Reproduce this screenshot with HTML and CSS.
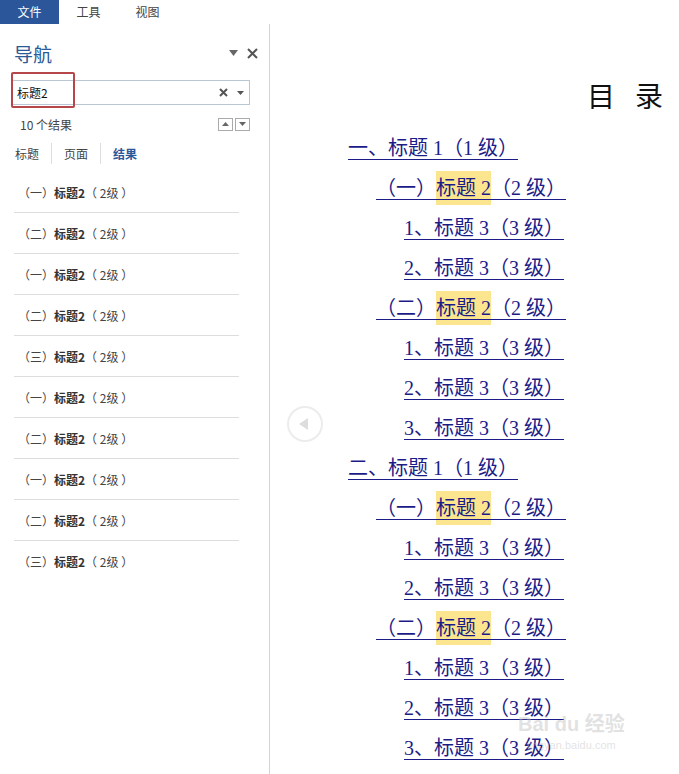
FILE: index.html
```html
<!DOCTYPE html>
<html lang="zh">
<head>
<meta charset="utf-8">
<link rel="stylesheet" href="styles.css">
</head>
<body>
<div class="topbar">
  <div class="tab active">文件</div>
  <div class="tab">工具</div>
  <div class="tab">视图</div>
</div>
<div class="main">
  <aside class="nav">
    <div class="nav-head">
      <div class="nav-title">导航</div>
      <div class="nav-ctrls">
        <svg width="9" height="6" viewBox="0 0 9 6"><path d="M0 0h9L4.5 6z" fill="#666"/></svg>
        <svg width="11" height="11" viewBox="0 0 11 11"><path d="M1 1L10 10M10 1L1 10" stroke="#555" stroke-width="2"/></svg>
      </div>
    </div>
    <div class="search">
      <span class="search-text">标题2</span>
      <svg class="s-x" width="9" height="9" viewBox="0 0 9 9"><path d="M1 1L8 8M8 1L1 8" stroke="#555" stroke-width="2"/></svg>
      <svg width="7" height="4" viewBox="0 0 7 4"><path d="M0 0h7L3.5 4z" fill="#555"/></svg>
      <div class="red-mark"></div>
    </div>
    <div class="count-row">
      <span>10 个结果</span>
      <div class="arrows">
        <div class="arr"><svg width="7" height="4" viewBox="0 0 7 4"><path d="M0 4h7L3.5 0z" fill="#666"/></svg></div>
        <div class="arr"><svg width="7" height="4" viewBox="0 0 7 4"><path d="M0 0h7L3.5 4z" fill="#666"/></svg></div>
      </div>
    </div>
    <div class="nav-tabs">
      <span class="ntab">标题</span>
      <span class="ntab">页面</span>
      <span class="ntab sel">结果</span>
    </div>
    <ul class="results">
      <li>（一）<b>标题2</b>（ 2级 ）</li>
      <li>（二）<b>标题2</b>（ 2级 ）</li>
      <li>（一）<b>标题2</b>（ 2级 ）</li>
      <li>（二）<b>标题2</b>（ 2级 ）</li>
      <li>（三）<b>标题2</b>（ 2级 ）</li>
      <li>（一）<b>标题2</b>（ 2级 ）</li>
      <li>（二）<b>标题2</b>（ 2级 ）</li>
      <li>（一）<b>标题2</b>（ 2级 ）</li>
      <li>（二）<b>标题2</b>（ 2级 ）</li>
      <li>（三）<b>标题2</b>（ 2级 ）</li>
    </ul>
  </aside>
  <section class="doc">
    <div class="collapse">
      <svg width="10" height="12" viewBox="0 0 10 12"><path d="M9 0v12L0 6z" fill="#ddd"/></svg>
    </div>
    <h1 class="doc-title">目<span class="gap"></span>录</h1>
    <div class="toc">
      <div class="l1"><a>一、标题 1（1 级）</a></div>
      <div class="l2"><a>（一）<mark>标题 2</mark>（2 级）</a></div>
      <div class="l3"><a>1、标题 3（3 级）</a></div>
      <div class="l3"><a>2、标题 3（3 级）</a></div>
      <div class="l2"><a>（二）<mark>标题 2</mark>（2 级）</a></div>
      <div class="l3"><a>1、标题 3（3 级）</a></div>
      <div class="l3"><a>2、标题 3（3 级）</a></div>
      <div class="l3"><a>3、标题 3（3 级）</a></div>
      <div class="l1"><a>二、标题 1（1 级）</a></div>
      <div class="l2"><a>（一）<mark>标题 2</mark>（2 级）</a></div>
      <div class="l3"><a>1、标题 3（3 级）</a></div>
      <div class="l3"><a>2、标题 3（3 级）</a></div>
      <div class="l2"><a>（二）<mark>标题 2</mark>（2 级）</a></div>
      <div class="l3"><a>1、标题 3（3 级）</a></div>
      <div class="l3"><a>2、标题 3（3 级）</a></div>
      <div class="l3"><a>3、标题 3（3 级）</a></div>
    </div>
    <div class="watermark"><span class="wm-big">Bai du 经验</span><span class="wm-small">jingyan.baidu.com</span></div>
  </section>
</div>
</body>
</html>
```

FILE: styles.css
```css
* { box-sizing: border-box; }
html, body { margin: 0; padding: 0; background: #fff; }
body {
  width: 679px; height: 774px; overflow: hidden;
  font-family: "Noto Sans CJK SC", "Liberation Sans", sans-serif;
  font-size: 12px; color: #444;
  display: flex; flex-direction: column;
  text-spacing-trim: space-all;
}
.topbar { height: 24px; display: flex; flex: none; }
.tab { width: 59px; display: flex; align-items: center; justify-content: center; color: #444; font-size: 12px; line-height: 1; }
.tab.active { background: #2b579a; color: #fff; }
.main { flex: 1; display: flex; min-height: 0; }
.nav { width: 270px; flex: none; border-right: 1px solid #d4d4d4; padding: 0 19px 0 12px; }
.nav-head { height: 56px; display: flex; align-items: center; justify-content: space-between; padding-top: 2px; }
.nav-title { font-size: 19px; color: #2b5a96; padding-left: 2px; line-height: 1; }
.nav-ctrls { display: flex; align-items: center; gap: 9px; margin-right: -8px; }
.search { position: relative; height: 25px; border: 1px solid #b9c6d4; display: flex; align-items: center; padding: 0 5px 0 4px; gap: 9px; }
.search-text { flex: 1; color: #111; font-size: 12px; }
.red-mark { position: absolute; left: -2px; top: -9px; width: 64px; height: 36px; border: 2px solid #b5474a; border-radius: 2px; }
.count-row { height: 38px; display: flex; align-items: center; justify-content: space-between; padding-left: 8px; color: #444; }
.arrows { display: flex; gap: 2px; }
.arr { width: 15px; height: 13px; border: 1px solid #aaa; display: flex; align-items: center; justify-content: center; background: #fff; }
.nav-tabs { height: 21px; display: flex; align-items: center; margin-top: 0; padding-left: 3px; }
.ntab { padding: 0 12px; border-left: 1px solid #ddd; line-height: 21px; color: #444; }
.ntab:first-child { border-left: none; padding-left: 0; }
.ntab.sel { color: #2b579a; font-weight: bold; }
.results { list-style: none; margin: 8px 11px 0 2px; padding: 0; }
.results li { height: 41px; display: flex; align-items: center; padding-left: 4px; border-bottom: 1px solid #ddd; color: #444; white-space: pre; }
.results li:last-child { border-bottom: none; }
.results b { color: #333; font-weight: bold; }
.doc { flex: 1; position: relative; padding-left: 78px; overflow: hidden; font-family: "Liberation Serif", "Noto Sans CJK SC", serif; }
.collapse { position: absolute; left: 17px; top: 382px; width: 36px; height: 36px; border: 2px solid #ececec; border-radius: 50%; display: flex; align-items: center; justify-content: center; padding-right: 3px; }
.doc-title { margin: 54px 0 0 0; padding-left: 239px; font-weight: normal; font-size: 28px; line-height: 40px; color: #111; display: flex; }
.gap { width: 20px; }
.toc { margin-top: 8px; }
.toc > div { height: 40px; display: flex; align-items: center; font-size: 20px; color: #1c1c88; }
.toc a { text-decoration: underline; text-decoration-thickness: 1px; text-underline-offset: 4px; color: #1c1c88; white-space: pre; }
.toc .l2 { padding-left: 28px; }
.toc .l3 { padding-left: 56px; }
.toc mark { background: #fbe58e; color: #1c1c88; padding: 6px 0; }
.watermark { position: absolute; left: 248px; top: 690px; display: flex; flex-direction: column; align-items: center; color: rgba(190,190,190,0.45); font-family: "Liberation Sans", "Noto Sans CJK SC", sans-serif; line-height: 1; white-space: nowrap; }
.wm-big { font-size: 20px; font-weight: bold; }
.wm-small { font-size: 11px; margin-top: 6px; }
```
